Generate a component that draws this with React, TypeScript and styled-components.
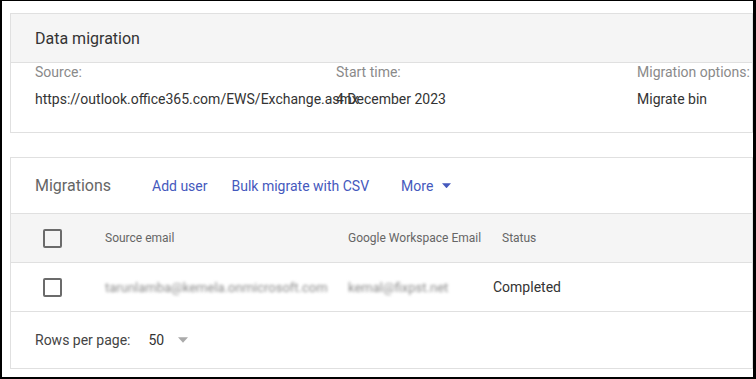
import React from "react";
import styled, { createGlobalStyle } from "styled-components";

const Global = createGlobalStyle`
  html, body { margin: 0; padding: 0; background: #fff; }
  body { font-family: Roboto, "Liberation Sans", Arial, sans-serif; }
  * { box-sizing: border-box; }
`;

const Frame = styled.div`
  width: 756px;
  height: 379px;
  border-style: solid;
  border-color: #000;
  border-width: 1px 3px 2px 2px;
  padding: 12px 0 0 8px;
  display: flex;
  flex-direction: column;
  gap: 24px;
  overflow: hidden;
  background: #fff;
`;

const Card = styled.section`
  border: 1px solid #e0e0e0;
  background: #fff;
  display: flex;
  flex-direction: column;
`;

const CardHeader = styled.div`
  height: 49px;
  background: #f5f5f5;
  border-bottom: 1px solid #e0e0e0;
  display: flex;
  align-items: center;
  padding-left: 24px;
  font-size: 16px;
  color: #333;
`;

const InfoGrid = styled.div`
  display: grid;
  grid-template-columns: 301px 301px 301px;
  grid-template-rows: 16px 20px;
  row-gap: 9px;
  padding: 1px 24px 0 24px;
  height: 69px;
  white-space: nowrap;
`;

const Label = styled.div`
  font-size: 14px;
  line-height: 16px;
  color: #8a8a8a;
`;

const Value = styled.div`
  font-size: 14px;
  line-height: 20px;
  color: #333;
`;

const Toolbar = styled.div`
  height: 56px;
  border-bottom: 1px solid #e0e0e0;
  display: flex;
  align-items: center;
  padding-left: 24px;
`;

const ToolbarTitle = styled.div`
  font-size: 16px;
  color: #666;
  margin-right: 41px;
`;

const LinkButton = styled.div`
  font-size: 14px;
  color: #4559bd;
  margin-right: 24px;
  display: flex;
  align-items: center;
  gap: 9px;
  &:last-child { margin-left: 8px; }
`;

const Row = styled.div<{ $cols: string; $head?: boolean; $h: number }>`
  display: grid;
  grid-template-columns: ${(p) => p.$cols};
  align-items: center;
  height: ${(p) => p.$h}px;
  background: ${(p) => (p.$head ? "#f5f5f5" : "#fff")};
  border-bottom: 1px solid #e0e0e0;
  white-space: nowrap;
`;

const CheckCell = styled.div`
  padding-left: 32px;
  display: flex;
  align-items: center;
`;

const Checkbox = styled.div`
  width: 19px;
  height: 19px;
  border: 2px solid #6b6b6b;
  border-radius: 2px;
`;

const HeadText = styled.div`
  font-size: 12px;
  color: #666;
`;

const Blurred = styled.div`
  font-size: 13px;
  color: #8c8c8c;
  filter: blur(1.4px);
`;

const CellText = styled.div`
  font-size: 14px;
  color: #333;
`;

const Footer = styled.div`
  height: 56px;
  display: flex;
  align-items: center;
  padding-left: 24px;
  font-size: 14px;
  color: #444;
`;

const PageSize = styled.div`
  margin-left: 18px;
  display: flex;
  align-items: center;
  gap: 14px;
  font-size: 14px;
  color: #333;
`;

const Caret = ({ color, w }: { color: string; w: number }) => (
  <svg width={w} height={w / 2 + 1} viewBox="0 0 10 5.5">
    <path d="M0 0 L10 0 L5 5.5 Z" fill={color} />
  </svg>
);

export default function App() {
  return (
    <>
      <Global />
      <Frame>
        <Card>
          <CardHeader>Data migration</CardHeader>
          <InfoGrid>
            <Label>Source:</Label>
            <Label>Start time:</Label>
            <Label>Migration options:</Label>
            <Value>https://outlook.office365.com/EWS/Exchange.asmx</Value>
            <Value>4 December 2023</Value>
            <Value>Migrate bin</Value>
          </InfoGrid>
        </Card>
        <Card>
          <Toolbar>
            <ToolbarTitle>Migrations</ToolbarTitle>
            <LinkButton>Add user</LinkButton>
            <LinkButton>Bulk migrate with CSV</LinkButton>
            <LinkButton>
              More <Caret color="#4559bd" w={9} />
            </LinkButton>
          </Toolbar>
          <Row $cols="94px 243px 154px 1fr" $head $h={49}>
            <CheckCell>
              <Checkbox />
            </CheckCell>
            <HeadText>Source email</HeadText>
            <HeadText>Google Workspace Email</HeadText>
            <HeadText>Status</HeadText>
          </Row>
          <Row $cols="94px 243px 145px 1fr" $h={49}>
            <CheckCell>
              <Checkbox />
            </CheckCell>
            <Blurred>tarunlamba@kemela.onmicrosoft.com</Blurred>
            <Blurred>kemal@fixpst.net</Blurred>
            <CellText>Completed</CellText>
          </Row>
          <Footer>
            Rows per page:
            <PageSize>
              50 <Caret color="#aaaaaa" w={10} />
            </PageSize>
          </Footer>
        </Card>
      </Frame>
    </>
  );
}
